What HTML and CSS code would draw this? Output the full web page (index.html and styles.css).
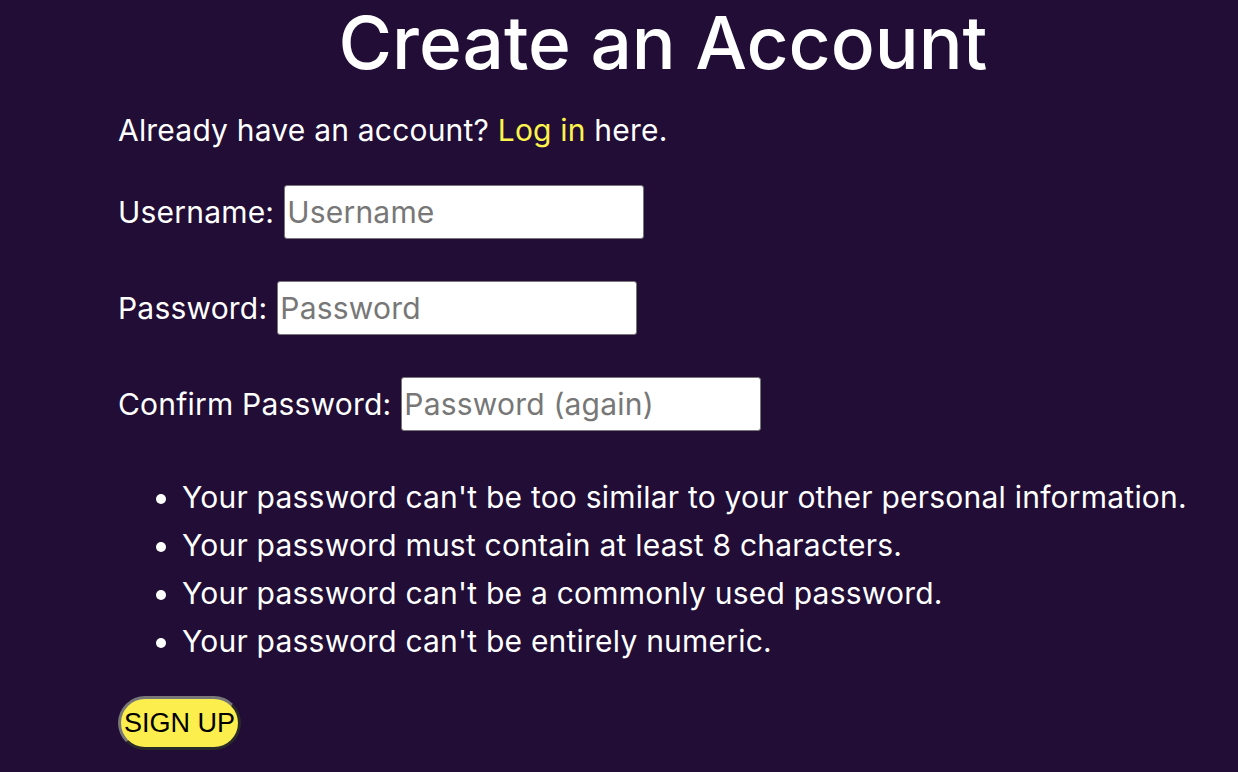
FILE: index.html
```html
<!DOCTYPE html>
<html lang="en">
<head>
<meta charset="utf-8">
<title>Create an Account</title>
<link rel="stylesheet" href="styles.css">
</head>
<body>
<main class="page">
  <h1 class="title">Create an Account</h1>
  <p class="intro">Already have an account? <a class="link" href="#">Log in</a> here.</p>
  <form class="form">
    <p class="field"><label class="label" for="u">Username:</label> <input class="input" id="u" type="text" placeholder="Username"></p>
    <p class="field"><label class="label" for="p1">Password:</label> <input class="input" id="p1" type="password" placeholder="Password"></p>
    <p class="field"><label class="label" for="p2">Confirm Password:</label> <input class="input" id="p2" type="password" placeholder="Password (again)"></p>
    <ul class="rules">
      <li>Your password can't be too similar to your other personal information.</li>
      <li>Your password must contain at least 8 characters.</li>
      <li>Your password can't be a commonly used password.</li>
      <li>Your password can't be entirely numeric.</li>
    </ul>
    <button class="btn" type="submit">SIGN UP</button>
  </form>
</main>
</body>
</html>
```

FILE: styles.css
```css
html, body {
  margin: 0;
  background: #210d35;
}
body {
  font-family: Inter, "Noto Sans", sans-serif;
  color: #ffffff;
}
.page {
  padding: 0 30px 0 118px;
}
.title {
  margin: 0;
  text-align: center;
  font-size: 73px;
  font-weight: 500;
  line-height: 86px;
}
.intro {
  margin: 20px 0 0;
  font-size: 30px;
  line-height: 48px;
  letter-spacing: 0.2px;
}
.link {
  color: #fdf34d;
  text-decoration: none;
}
.form {
  margin-top: 31px;
}
.field {
  margin: 0 0 42px;
  font-size: 30px;
  line-height: 54px;
  letter-spacing: 0.2px;
  display: flex;
  align-items: center;
  gap: 10px;
}
.input {
  box-sizing: border-box;
  width: 360px;
  height: 54px;
  margin: 0;
  padding: 0 2px;
  border: 1.5px solid #767676;
  border-radius: 3px;
  background: #fff;
  font-family: Inter, "Noto Sans", sans-serif;
  font-size: 30px;
  letter-spacing: 0.2px;
  color: #000;
}
.input::placeholder {
  color: #777;
}
.rules {
  margin: 0;
  padding: 0 0 0 64px;
  font-size: 30px;
  line-height: 48px;
  letter-spacing: 0.22px;
}
.btn {
  margin-top: 31px;
  box-sizing: border-box;
  width: 123px;
  height: 54px;
  padding: 0;
  background: #fcee4c;
  border: 3px solid;
  border-color: #777777 #2a2a2a #2a2a2a #777777;
  border-radius: 27px;
  font-family: "Liberation Sans", Arial, sans-serif;
  font-size: 27px;
  color: #000;
}
```
